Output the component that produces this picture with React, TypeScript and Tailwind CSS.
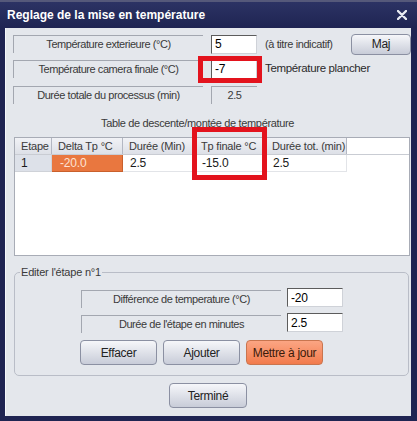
import React from 'react';

const Label: React.FC<{ className?: string; children: React.ReactNode }> = ({ className = '', children }) => (
    <div className={`flex items-center justify-center h-[18px] tracking-[-0.45px] border-t border-l border-[#a3a7b0] border-b-[#fbfcfd] border-r-[#fbfcfd] ${className}`}>
        {children}
    </div>
);

const Field: React.FC<{ className?: string; value: string }> = ({ className = '', value }) => (
    <div className={`flex items-center bg-white pl-[3px] text-[12px] text-black border border-t-[#5c5c5c] border-l-[#5c5c5c] border-b-[#cfd2d8] border-r-[#cfd2d8] ${className}`}>
        {value}
    </div>
);

const Btn: React.FC<{ className?: string; orange?: boolean; children: React.ReactNode }> = ({ className = '', orange, children }) => (
    <button
        className={`flex items-center justify-center rounded-[4px] border text-[12px] tracking-[-0.3px] ${
            orange
                ? 'bg-gradient-to-b from-[#fba583] to-[#f27b4c] border-[#c9754f] text-[#3a1a0a]'
                : 'bg-gradient-to-b from-[#f6f7fa] to-[#c8ccd8] border-[#8b90a2] text-[#222]'
        } ${className}`}
    >
        {children}
    </button>
);

const COLS = [
    { label: 'Etape', w: 'w-[37px]' },
    { label: 'Delta Tp °C', w: 'w-[71px]' },
    { label: 'Durée (Min)', w: 'w-[72px]' },
    { label: 'Tp finale °C', w: 'w-[71px]' },
    { label: 'Durée tot. (min)', w: 'w-[81px]' },
];

export default function App() {
    return (
        <div className="w-[417px] h-[421px] bg-[#1f2452] flex flex-col font-['Liberation_Sans',Arial,sans-serif] text-[11px] tracking-[-0.2px] text-[#3a3a3a]">
            {/* title bar */}
            <div className="h-[28px] flex items-center justify-between pl-[7px] pr-[10px] border-t-2 border-[#55597a] bg-gradient-to-b from-[#2c3364] to-[#1f2452]">
                <span className="text-white font-bold text-[12px] tracking-normal">Reglage de la mise en température</span>
                <svg width="10" height="10" viewBox="0 0 10 10">
                    <path d="M1 1 L9 9 M9 1 L1 9" stroke="#e8eaf2" strokeWidth="2.4" strokeLinecap="round" />
                </svg>
            </div>

            {/* client */}
            <div className="ml-[5px] w-[406px] h-[388px] bg-[#e4e7ec] border-l border-[#f5f7fb] flex flex-col pl-[7px]">
                <div className="mt-[5px] h-[22px] flex items-center">
                    <Label className="w-[190px]">Température exterieure (°C)</Label>
                    <Field className="ml-[8px] w-[46px] h-[19px]" value="5" />
                    <span className="ml-[8px] tracking-[-0.4px]">(à titre indicatif)</span>
                    <Btn className="ml-auto w-[60px] h-[21px]">Maj</Btn>
                </div>

                <div className="mt-[3px] h-[22px] flex items-center">
                    <Label className="w-[190px]">Température camera finale (°C)</Label>
                    <div className="relative ml-[8px]">
                        <Field className="w-[46px] h-[19px]" value="-7" />
                        <div className="absolute left-[-13px] right-[-5px] top-[-4px] bottom-[-4px] border-[5px] border-[#e3131d]" />
                    </div>
                    <span className="ml-[8px] text-[11.5px] tracking-[-0.35px] text-[#2a2a2a]">Température plancher</span>
                </div>

                <div className="mt-[4px] h-[22px] flex items-center">
                    <Label className="w-[190px]">Durée totale du processus (min)</Label>
                    <Label className="ml-[8px] w-[46px]">2.5</Label>
                </div>

                <div className="mt-[10px] h-[14px] leading-[14px] pl-[88px] tracking-[-0.35px]">Table de descente/montée de température</div>

                {/* table */}
                <div className="relative mt-[7px] ml-[1px] w-[396px] h-[119px] bg-white border border-[#a8acb6]">
                    <div className="flex h-[17px] border-b border-[#c9ccd3]">
                        {COLS.map(c => (
                            <div key={c.label} className={`${c.w} h-full flex items-center pl-[6px] border-r border-[#b3b7c2] bg-gradient-to-b from-[#f1f2f6] to-[#dde0e7]`}>
                                {c.label}
                            </div>
                        ))}
                    </div>
                    <div className="flex h-[17px] text-[12px] text-[#1a1a1a]">
                        <div className="w-[37px] h-full flex items-center pl-[6px] bg-[#dde1e9] border-r border-b border-[#cfd2d8]">1</div>
                        <div className="w-[71px] h-full flex items-center pl-[8px] bg-[#e9773f] text-[#fde3d4] border-r border-b border-[#c9602c]">-20.0</div>
                        <div className="w-[72px] h-full flex items-center pl-[7px] border-r border-b border-[#e2e4e8]">2.5</div>
                        <div className="w-[71px] h-full flex items-center pl-[7px] border-r border-b border-[#e2e4e8]">-15.0</div>
                        <div className="w-[81px] h-full flex items-center pl-[7px] border-r border-b border-[#e2e4e8]">2.5</div>
                    </div>
                    <div className="absolute left-[177px] top-[-11px] w-[75px] h-[53px] border-[5px] border-[#e3131d]" />
                </div>

                {/* edit group */}
                <fieldset className="mt-[10px] ml-[1px] w-[395px] h-[110px] border border-[#b9bdc7] rounded-[5px] flex flex-col">
                    <legend className="ml-[5px] px-[1px] leading-[13px]">Editer l'étape n°1</legend>
                    <div className="mt-[10px] h-[20px] flex items-center pl-[66px]">
                        <Label className="w-[200px]">Différence de temperature (°C)</Label>
                        <Field className="ml-[6px] w-[56px] h-[19px] -mt-[3px]" value="-20" />
                    </div>
                    <div className="mt-[5px] h-[20px] flex items-center pl-[66px]">
                        <Label className="w-[200px]">Durée de l'étape en minutes</Label>
                        <Field className="ml-[6px] w-[56px] h-[19px] -mt-[3px]" value="2.5" />
                    </div>
                    <div className="mt-[6px] flex pl-[65px] gap-[6px]">
                        <Btn className="w-[77px] h-[25px]">Effacer</Btn>
                        <Btn className="w-[77px] h-[25px]">Ajouter</Btn>
                        <Btn orange className="w-[77px] h-[25px]">Mettre à jour</Btn>
                    </div>
                </fieldset>

                <Btn className="mt-[7px] ml-[156px] w-[78px] h-[25px]">Terminé</Btn>
            </div>
        </div>
    );
}
